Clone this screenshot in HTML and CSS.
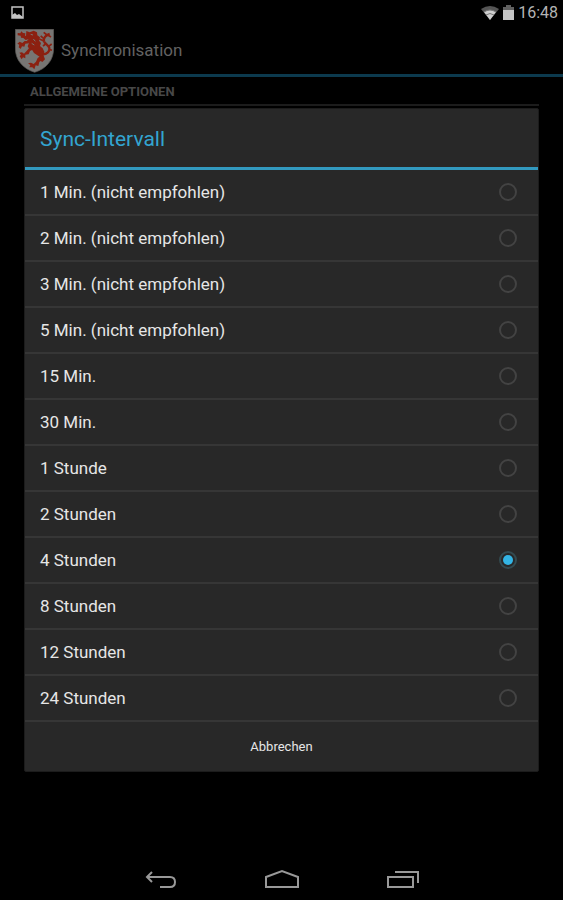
FILE: index.html
```
<!DOCTYPE html>
<html lang="de">
<head>
  <meta charset="UTF-8">
  <title>Synchronisation</title>
  <meta name="viewport" content="width=device-width, initial-scale=1.0">
  <link rel="stylesheet" href="styles.css">
</head>
<body>
  <header class="status-bar">
    <svg class="status-picture" width="14" height="14" viewBox="0 0 14 14">
      <path d="M2 1h11v11H2z" fill="none" stroke="#c4c4c4" stroke-width="1.5"/>
      <path d="M2 12V9l3-2 2 2 2-1 4 3v1z" fill="#c4c4c4"/>
    </svg>
    <div class="status-right">
      <svg width="18" height="14" viewBox="0 0 18 14">
        <path d="M0 3Q9-3 18 3L9 14z" fill="#555"/>
        <path d="M3 6Q9 2 15 6L9 14z" fill="#d0d0d0"/>
        <path d="M3 6Q9 2 15 6M5 9Q9 6 13 9" fill="none" stroke="#777" stroke-width="1"/>
      </svg>
      <svg width="11" height="15" viewBox="0 0 11 15">
        <path d="M3 0h5v2h3v4H0V2h3z" fill="#606060"/>
        <path d="M0 5h11v10H0z" fill="#c4c4c4"/>
      </svg>
      <span class="clock">16:48</span>
    </div>
  </header>

  <div class="action-bar">
    <svg class="shield" width="39" height="44" viewBox="0 0 117 132">
      <path d="M1 1H116V58C116 94 94 119 59 130C24 119 1 94 1 58z" fill="#777573" stroke="#5c5a58" stroke-width="2"/>
      <g fill="#8c2010">
        <path d="M34 6L44 10 56 5 66 10 67 19 75 25 72 35 78 42 75 51 83 58 88 68 86 80 90 91 82 99 73 94 76 85 66 78 57 72 52 64 43 61 38 52 42 42 36 35 43 28 33 23z"/>
        <path d="M45 29L32 33 25 27 18 26 17 20 8 19 8 12 16 13 19 7 24 12 31 13 30 20 41 21z"/>
        <path d="M42 43L31 44 28 53 21 52 17 60 11 55 13 47 7 44 14 38 22 42 29 36 41 36z"/>
        <path d="M57 60L45 66 41 76 31 77 31 88 24 85 20 91 14 82 18 77 13 71 21 70 27 74 34 67 42 58z"/>
        <path d="M84 76L83 91 73 99 70 111 62 109 58 121 52 115 43 115 46 108 39 103 48 101 56 105 63 98 68 87z"/>
      </g>
      <path d="M83 76C96 76 105 67 103 57C101 48 90 45 87 37C84 27 93 18 104 15" fill="none" stroke="#8c2010" stroke-width="7"/>
      <path d="M86 28L77 21M85 35L73 30M92 45L84 51M101 52L110 45M102 61L111 64M96 18L86 10M98 18L108 24" stroke="#8c2010" stroke-width="5"/>
      <path d="M47 16L54 18M55 30L61 37M50 43L58 48" stroke="#777573" stroke-width="3"/>
    </svg>
    <h1>Synchronisation</h1>
  </div>

  <main class="settings">
    <h2>Allgemeine Optionen</h2>
  </main>

  <div class="overlay">
    <form class="dialog" role="dialog" aria-labelledby="dialog-title">
      <h2 class="dialog-title" id="dialog-title">Sync-Intervall</h2>
      <div class="options">
        <label class="option"><span>1 Min. (nicht empfohlen)</span><input type="radio" name="interval" value="1"></label>
        <label class="option"><span>2 Min. (nicht empfohlen)</span><input type="radio" name="interval" value="2"></label>
        <label class="option"><span>3 Min. (nicht empfohlen)</span><input type="radio" name="interval" value="3"></label>
        <label class="option"><span>5 Min. (nicht empfohlen)</span><input type="radio" name="interval" value="5"></label>
        <label class="option"><span>15 Min.</span><input type="radio" name="interval" value="15"></label>
        <label class="option"><span>30 Min.</span><input type="radio" name="interval" value="30"></label>
        <label class="option"><span>1 Stunde</span><input type="radio" name="interval" value="60"></label>
        <label class="option"><span>2 Stunden</span><input type="radio" name="interval" value="120"></label>
        <label class="option"><span>4 Stunden</span><input type="radio" name="interval" value="240" checked></label>
        <label class="option"><span>8 Stunden</span><input type="radio" name="interval" value="480"></label>
        <label class="option"><span>12 Stunden</span><input type="radio" name="interval" value="720"></label>
        <label class="option"><span>24 Stunden</span><input type="radio" name="interval" value="1440"></label>
      </div>
      <button type="button" class="cancel-btn">Abbrechen</button>
    </form>
  </div>

  <nav class="nav-bar">
    <button type="button" aria-label="Zurück">
      <svg width="36" height="22" viewBox="0 0 36 22">
        <path d="M9 3L4 8L9 13M4 8H27Q32 8 32 13Q32 18 27 18H17" fill="none" stroke="#999" stroke-width="2"/>
      </svg>
    </button>
    <button type="button" aria-label="Startseite">
      <svg width="36" height="22" viewBox="0 0 36 22">
        <path d="M2 18V8L18 2L34 8V18z" fill="none" stroke="#999" stroke-width="2"/>
      </svg>
    </button>
    <button type="button" aria-label="Letzte Apps">
      <svg width="36" height="22" viewBox="0 0 36 22">
        <path d="M3 8H28V18H3zM10 3H33V14" fill="none" stroke="#999" stroke-width="2"/>
      </svg>
    </button>
  </nav>
</body>
</html>
```
FILE: styles.css
```
* {
  box-sizing: border-box;
}
body {
  margin: 0;
  min-height: 100vh;
  display: flex;
  flex-direction: column;
  position: relative;
  background: #000;
  color: #e6e6e6;
  font-family: Roboto, 'Liberation Sans', sans-serif;
}
h1, h2 {
  margin: 0;
}
svg {
  display: block;
}
.status-bar {
  display: flex;
  justify-content: space-between;
  align-items: center;
  height: 25px;
  padding: 0 5px 0 10px;
}
.status-right {
  display: flex;
  align-items: center;
  gap: 4px;
}
.clock {
  font-size: 16px;
  color: #b4b4b4;
}
.action-bar {
  display: flex;
  align-items: center;
  gap: 7px;
  height: 52px;
  padding: 0 15px;
  border-bottom: 3px solid #0c3a4e;
}
.shield {
  margin-top: 2px;
}
.action-bar h1 {
  font-size: 17px;
  font-weight: 400;
  color: #626262;
}
.settings {
  flex: 1;
  padding: 0 24px;
}
.settings h2 {
  height: 29px;
  padding-left: 6px;
  border-bottom: 2px solid #1c1c1c;
  font-size: 13px;
  line-height: 30px;
  font-weight: 700;
  text-transform: uppercase;
  color: #484848;
}
/* Dialog sits between the status bar and the navigation bar */
.overlay {
  position: absolute;
  inset: 24px 0 45px;
  display: flex;
  align-items: center;
  padding: 0 24px;
}
.dialog {
  flex: 1;
  background: #282828;
  border: 1px solid #1c1c1c;
  border-radius: 2px;
}
.dialog-title {
  height: 61px;
  padding: 0 15px;
  border-bottom: 3px solid #3299bf;
  font-size: 21px;
  line-height: 60px;
  font-weight: 400;
  color: #33a5d1;
}
.option {
  display: flex;
  justify-content: space-between;
  align-items: center;
  height: 46px;
  padding: 0 21px 0 15px;
  border-bottom: 2px solid #363636;
  font-size: 17px;
}
.option input {
  appearance: none;
  display: grid;
  place-items: center;
  width: 18px;
  height: 18px;
  margin: 0;
  border: 2px solid #434343;
  border-radius: 50%;
}
.option input:checked {
  border-color: #334a50;
}
.option input:checked::before {
  content: '';
  width: 10px;
  height: 10px;
  border-radius: 50%;
  background: #33b5e5;
}
.cancel-btn {
  display: block;
  width: 100%;
  height: 49px;
  border: none;
  background: none;
  font-family: inherit;
  font-size: 13px;
  color: #e6e6e6;
}
.nav-bar {
  display: flex;
  justify-content: center;
  gap: 85px;
  height: 45px;
  padding-top: 14px;
}
.nav-bar button {
  height: 22px;
  padding: 0;
  border: none;
  background: none;
}
```
